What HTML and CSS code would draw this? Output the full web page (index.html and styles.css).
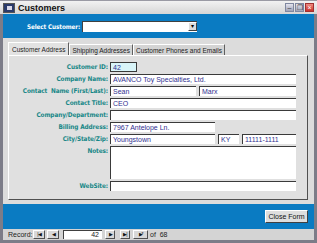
FILE: index.html
```html
<!DOCTYPE html>
<html>
<head>
    <title>Customers</title>
    <link rel="stylesheet" href="styles.css">
</head>
<body>
    <div class="window">
        <div class="titlebar">
            <span class="app-icon"><span></span></span>
            <span class="title">Customers</span>
            <div class="win-btns">
                <span class="win-btn">&#8211;</span>
                <span class="win-btn">&#10064;</span>
                <span class="win-btn close">&#215;</span>
            </div>
        </div>
        <div class="header">
            <label class="select-label">Select Customer:</label>
            <div class="combo">
                <span class="combo-btn">&#9662;</span>
            </div>
        </div>
        <div class="body">
            <div class="tabs">
                <div class="tab active">Customer Address</div>
                <div class="tab">Shipping Addresses</div>
                <div class="tab">Customer Phones and Emails</div>
            </div>
            <div class="page">
                <div class="form">
                    <label>Customer ID:</label>
                    <div class="fields"><div class="field id">42</div></div>

                    <label>Company Name:</label>
                    <div class="fields"><div class="field wide">AVANCO Toy Specialties, Ltd.</div></div>

                    <label>Contact&nbsp; Name (First/Last):</label>
                    <div class="fields">
                        <div class="field first">Sean</div>
                        <div class="field last">Marx</div>
                    </div>

                    <label>Contact Title:</label>
                    <div class="fields"><div class="field wide">CEO</div></div>

                    <label>Company/Department:</label>
                    <div class="fields"><div class="field wide"></div></div>

                    <label>Billing Address:</label>
                    <div class="fields"><div class="field addr">7967 Antelope Ln.</div></div>

                    <label>City/State/Zip:</label>
                    <div class="fields">
                        <div class="field addr">Youngstown</div>
                        <div class="field state">KY</div>
                        <div class="field zip">11111-1111</div>
                    </div>

                    <label>Notes:</label>
                    <div class="fields tall"><div class="field notes"></div></div>

                    <label>WebSite:</label>
                    <div class="fields"><div class="field full"></div></div>
                </div>
            </div>
        </div>
        <div class="footer">
            <button class="close-btn">Close Form</button>
        </div>
        <div class="recordbar">
            <span class="rec-label">Record:</span>
            <span class="nav-btn first-btn">|&#9664;</span>
            <span class="nav-btn prev-btn">&#9664;</span>
            <span class="rec-input">42</span>
            <span class="nav-btn next-btn">&#9654;</span>
            <span class="nav-btn last-btn">&#9654;|</span>
            <span class="nav-btn new">&#9654;*</span>
            <span class="rec-of">of&nbsp; 68</span>
        </div>
    </div>
</body>
</html>
```

FILE: styles.css
```css
body {
    margin: 0;
    font-family: 'Liberation Sans', Arial, sans-serif;
    background: #fff;
}
.window {
    width: 317px;
    height: 243px;
    box-sizing: border-box;
    border: 3px solid #7c7c88;
    border-top: none;
    display: flex;
    flex-direction: column;
    background: #dcdcdc;
}
.titlebar {
    height: 14px;
    margin: 0 -3px;
    padding: 0 3px;
    display: flex;
    align-items: center;
    background: linear-gradient(#f2f2f2, #d6d6d6);
    border-top: 1px solid #9a9aa4;
    box-sizing: border-box;
}
.app-icon {
    width: 10px;
    height: 8px;
    background: #2a3a6a;
    border: 1px solid #555;
    margin-right: 3px;
    display: flex;
    align-items: center;
    justify-content: center;
}
.app-icon span {
    width: 5px;
    height: 4px;
    background: #d8d8e8;
}
.title {
    font-size: 9px;
    font-weight: bold;
    color: #111;
    flex: 1;
}
.win-btns {
    display: flex;
    gap: 1px;
}
.win-btn {
    width: 9px;
    height: 9px;
    background: linear-gradient(#e4e4ee, #9fa3b8);
    border: 1px solid #8088a0;
    box-sizing: border-box;
    font-size: 7px;
    line-height: 7px;
    text-align: center;
    color: #333;
}
.win-btn.close {
    background: linear-gradient(#f08a80, #c8302a);
    color: #fff;
    border-color: #a03030;
}
.header {
    height: 24px;
    background: #0a7bc2;
    display: flex;
    align-items: center;
    padding-left: 24px;
}
.select-label {
    font-family: 'DejaVu Sans Condensed', 'DejaVu Sans', sans-serif;
    font-size: 6.3px;
    letter-spacing: -0.1px;
    font-weight: bold;
    color: #fff;
    width: 55px;
}
.combo {
    width: 115px;
    height: 11px;
    background: #fff;
    box-sizing: border-box;
    border-top: 1px solid #404040;
    border-left: 1px solid #404040;
    display: flex;
    justify-content: flex-end;
}
.combo-btn {
    width: 9px;
    height: 9px;
    background: #dcdcdc;
    border: 1px solid;
    border-color: #fff #404040 #404040 #fff;
    box-sizing: border-box;
    font-size: 6px;
    line-height: 7px;
    text-align: center;
    color: #000;
}
.body {
    height: 166px;
    padding: 4px 6px 0 5px;
    box-sizing: border-box;
    display: flex;
    flex-direction: column;
}
.tabs {
    display: flex;
    height: 13px;
}
.tab {
    font-size: 6.5px;
    color: #222;
    padding: 0 2px;
    border: 1px solid #fff;
    border-right-color: #606060;
    border-bottom: none;
    background: #d4d4d4;
    line-height: 11px;
    margin-top: 2px;
}
.tab.active {
    background: #e2e2e2;
    margin-top: 0;
    line-height: 13px;
    padding: 0 3px;
}
.page {
    height: 145px;
    border: 1px solid;
    border-color: #fff #505050 #505050 #fff;
    background: #e0e0e0;
    padding-top: 6px;
    box-sizing: border-box;
}
.form {
    display: grid;
    grid-template-columns: 99px 1fr;
    column-gap: 2px;
    row-gap: 2px;
}
.form label {
    font-family: 'DejaVu Sans Condensed', 'DejaVu Sans', sans-serif;
    font-size: 6.4px;
    letter-spacing: -0.1px;
    font-weight: bold;
    color: #178787;
    text-align: right;
    line-height: 10px;
    white-space: nowrap;
}
.fields {
    display: flex;
    gap: 3px;
    height: 10px;
}
.fields.tall {
    height: 33px;
}
.field {
    height: 10px;
    background: #fff;
    box-sizing: border-box;
    border-top: 1px solid #3a3a3a;
    border-left: 1px solid #3a3a3a;
    font-size: 7px;
    line-height: 9px;
    color: #303090;
    padding-left: 2px;
    overflow: hidden;
    white-space: nowrap;
}
.field.id {
    width: 27px;
    background: #d8f4f8;
    border: 1px solid #3a3a3a;
}
.field.wide {
    width: 186px;
}
.field.first {
    width: 86px;
}
.field.last {
    width: 97px;
}
.field.addr {
    width: 105px;
}
.field.state {
    width: 21px;
}
.field.zip {
    width: 54px;
}
.field.notes {
    height: 33px;
    width: 186px;
}
.field.full {
    width: 186px;
}
.footer {
    height: 25px;
    background: #0a7bc2;
    display: flex;
    align-items: center;
    justify-content: flex-end;
    padding-right: 6px;
}
.close-btn {
    font-family: 'Liberation Sans', Arial, sans-serif;
    font-size: 7px;
    width: 43px;
    height: 13px;
    padding: 0;
    background: #dedede;
    border: 1px solid;
    border-color: #fff #404040 #404040 #fff;
    color: #111;
}
.recordbar {
    flex: 1;
    display: flex;
    align-items: center;
    font-size: 7px;
    color: #222;
    padding-left: 5px;
    background: #d4d4d4;
}
.rec-label {
    width: 25px;
}
.nav-btn {
    width: 12px;
    height: 9px;
    box-sizing: border-box;
    border: 1px solid;
    border-color: #fff #505050 #505050 #fff;
    background: #d8d8d8;
    font-size: 5px;
    line-height: 7px;
    text-align: center;
    letter-spacing: -1px;
    color: #111;
}
.prev-btn {
    margin-left: 2px;
}
.next-btn {
    width: 10px;
}
.last-btn {
    width: 10px;
    margin-left: 5px;
}
.nav-btn.new {
    width: 15px;
    margin-left: 3px;
}
.rec-input {
    width: 39px;
    height: 9px;
    box-sizing: border-box;
    background: #fff;
    border-top: 1px solid #404040;
    border-left: 1px solid #404040;
    text-align: right;
    line-height: 8px;
    padding-right: 3px;
    margin: 0 3px 0 4px;
}
.rec-of {
    margin-left: 2px;
}
```
